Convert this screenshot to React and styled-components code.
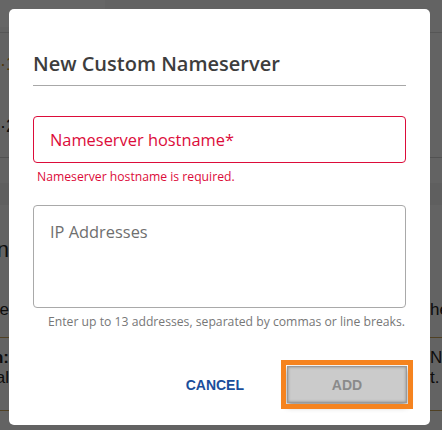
import React from "react";
import styled, { createGlobalStyle } from "styled-components";

const Global = createGlobalStyle`
  html, body { margin: 0; padding: 0; }
  body { width: 442px; height: 430px; overflow: hidden; font-family: "Open Sans", "Liberation Sans", sans-serif; }
  #root { width: 442px; height: 430px; position: relative; overflow: hidden; }
`;

const Page = styled.div`
  width: 442px;
  height: 430px;
  background: #f8f8f8;
  display: flex;
  flex-direction: column;
`;

const TopBar = styled.div`
  height: 33px;
  border-bottom: 1px solid #d8d8d8;
  box-sizing: border-box;
  display: flex;
`;

const Tab = styled.div`
  width: 105px;
  height: 27px;
  background: #ffffff;
  border-bottom-right-radius: 14px;
`;

const StepRow = styled.div`
  height: 62px;
  display: flex;
  align-items: center;
  font-family: "Liberation Sans", sans-serif;
  font-size: 18px;
  color: ${(p) => p.$color};
`;

const Divider = styled.div`
  height: 1px;
  background: ${(p) => p.$color};
  margin-top: ${(p) => p.$mt || 0}px;
`;

const Band = styled.div`
  height: 22px;
  margin-top: 25px;
  background: #eeeeee;
`;

const EdgeRow = styled.div`
  display: flex;
  justify-content: space-between;
  align-items: center;
  height: ${(p) => p.$h}px;
  margin-top: ${(p) => p.$mt || 0}px;
  font-family: "Liberation Sans", sans-serif;
  font-size: ${(p) => p.$size}px;
  font-weight: ${(p) => (p.$bold ? 700 : 400)};
  color: #222;
`;

const LeftEdge = styled.span`
  width: 9px;
  display: flex;
  justify-content: flex-end;
  white-space: nowrap;
`;

const RightEdge = styled.span`
  width: 12px;
  white-space: nowrap;
  font-weight: 400;
`;

const Overlay = styled.div`
  position: absolute;
  inset: 0;
  background: rgba(0, 0, 0, 0.6);
`;

const Modal = styled.div`
  position: absolute;
  left: 9px;
  top: 9px;
  width: 421px;
  height: 416px;
  box-sizing: border-box;
  background: #ffffff;
  border-radius: 5px;
  padding: 40px 24px 22px 24px;
  display: flex;
  flex-direction: column;
`;

const Title = styled.h2`
  margin: 0;
  font-family: "Open Sans", sans-serif;
  font-weight: 600;
  font-size: 20px;
  line-height: 30px;
  color: #3d3d3d;
  padding-bottom: 6px;
  border-bottom: 1px solid #a8a8a8;
`;

const Field = styled.div`
  margin-top: ${(p) => p.$mt}px;
  height: ${(p) => p.$h}px;
  box-sizing: border-box;
  border: 1px solid ${(p) => (p.$error ? "#dc0c3a" : "#a9a9a9")};
  border-radius: 4px;
  padding: ${(p) => (p.$multi ? "14px 16px" : "0 16px")};
  display: flex;
  align-items: ${(p) => (p.$multi ? "flex-start" : "center")};
  font-size: 16.4px;
  color: ${(p) => (p.$error ? "#dc0c3a" : "#6f6f6f")};
`;

const ErrorText = styled.div`
  margin: 6px 0 0 4px;
  font-size: 12.2px;
  line-height: 16px;
  color: #dc0c3a;
`;

const Helper = styled.div`
  margin: 6px 1px 0 0;
  text-align: right;
  font-size: 12.2px;
  line-height: 16px;
  color: #777777;
`;

const Actions = styled.div`
  margin-top: auto;
  margin-right: -1px;
  display: flex;
  justify-content: flex-end;
  align-items: center;
  gap: 27px;
`;

const TextButton = styled.button`
  border: none;
  background: transparent;
  font-family: "Liberation Sans", Arial, sans-serif;
  font-weight: 700;
  font-size: 14px;
  color: #1b4e9b;
  padding: 0 16px;
  height: 37px;
  cursor: pointer;
`;

const AddButton = styled.button`
  width: 120px;
  height: 37px;
  border: 1px solid #9a9a9a;
  background: #cbcbcb;
  font-family: "Liberation Sans", Arial, sans-serif;
  font-weight: 700;
  font-size: 14px;
  color: #8a8a8a;
  outline: 5px solid #f5831f;
  outline-offset: 1px;
  box-shadow: 0 3px 6px rgba(0, 0, 0, 0.45), inset 0 0 3px rgba(0, 0, 0, 0.35);
`;

export default function App() {
  return (
    <>
      <Global />
      <Page>
        <TopBar>
          <Tab />
        </TopBar>
        <StepRow $color="#c98a1a">·1</StepRow>
        <StepRow $color="#222">·2</StepRow>
        <Divider $color="#cccccc" />
        <Band />
        <EdgeRow $h={40} $mt={25} $size={22}>
          <LeftEdge>n</LeftEdge>
          <RightEdge></RightEdge>
        </EdgeRow>
        <EdgeRow $h={24} $mt={28} $size={17}>
          <LeftEdge>se</LeftEdge>
          <RightEdge>he</RightEdge>
        </EdgeRow>
        <Divider $color="#c9a25a" $mt={15} />
        <EdgeRow $h={20} $mt={10} $size={17} $bold>
          <LeftEdge>n:</LeftEdge>
          <RightEdge>NS</RightEdge>
        </EdgeRow>
        <EdgeRow $h={20} $size={17}>
          <LeftEdge>al</LeftEdge>
          <RightEdge>t.</RightEdge>
        </EdgeRow>
        <Divider $color="#c9a25a" $mt={22} />
      </Page>
      <Overlay />
      <Modal>
        <Title>New Custom Nameserver</Title>
        <Field $error $h={47} $mt={30}>Nameserver hostname*</Field>
        <ErrorText>Nameserver hostname is required.</ErrorText>
        <Field $multi $h={103} $mt={20}>IP Addresses</Field>
        <Helper>Enter up to 13 addresses, separated by commas or line breaks.</Helper>
        <Actions>
          <TextButton>CANCEL</TextButton>
          <AddButton>ADD</AddButton>
        </Actions>
      </Modal>
    </>
  );
}
